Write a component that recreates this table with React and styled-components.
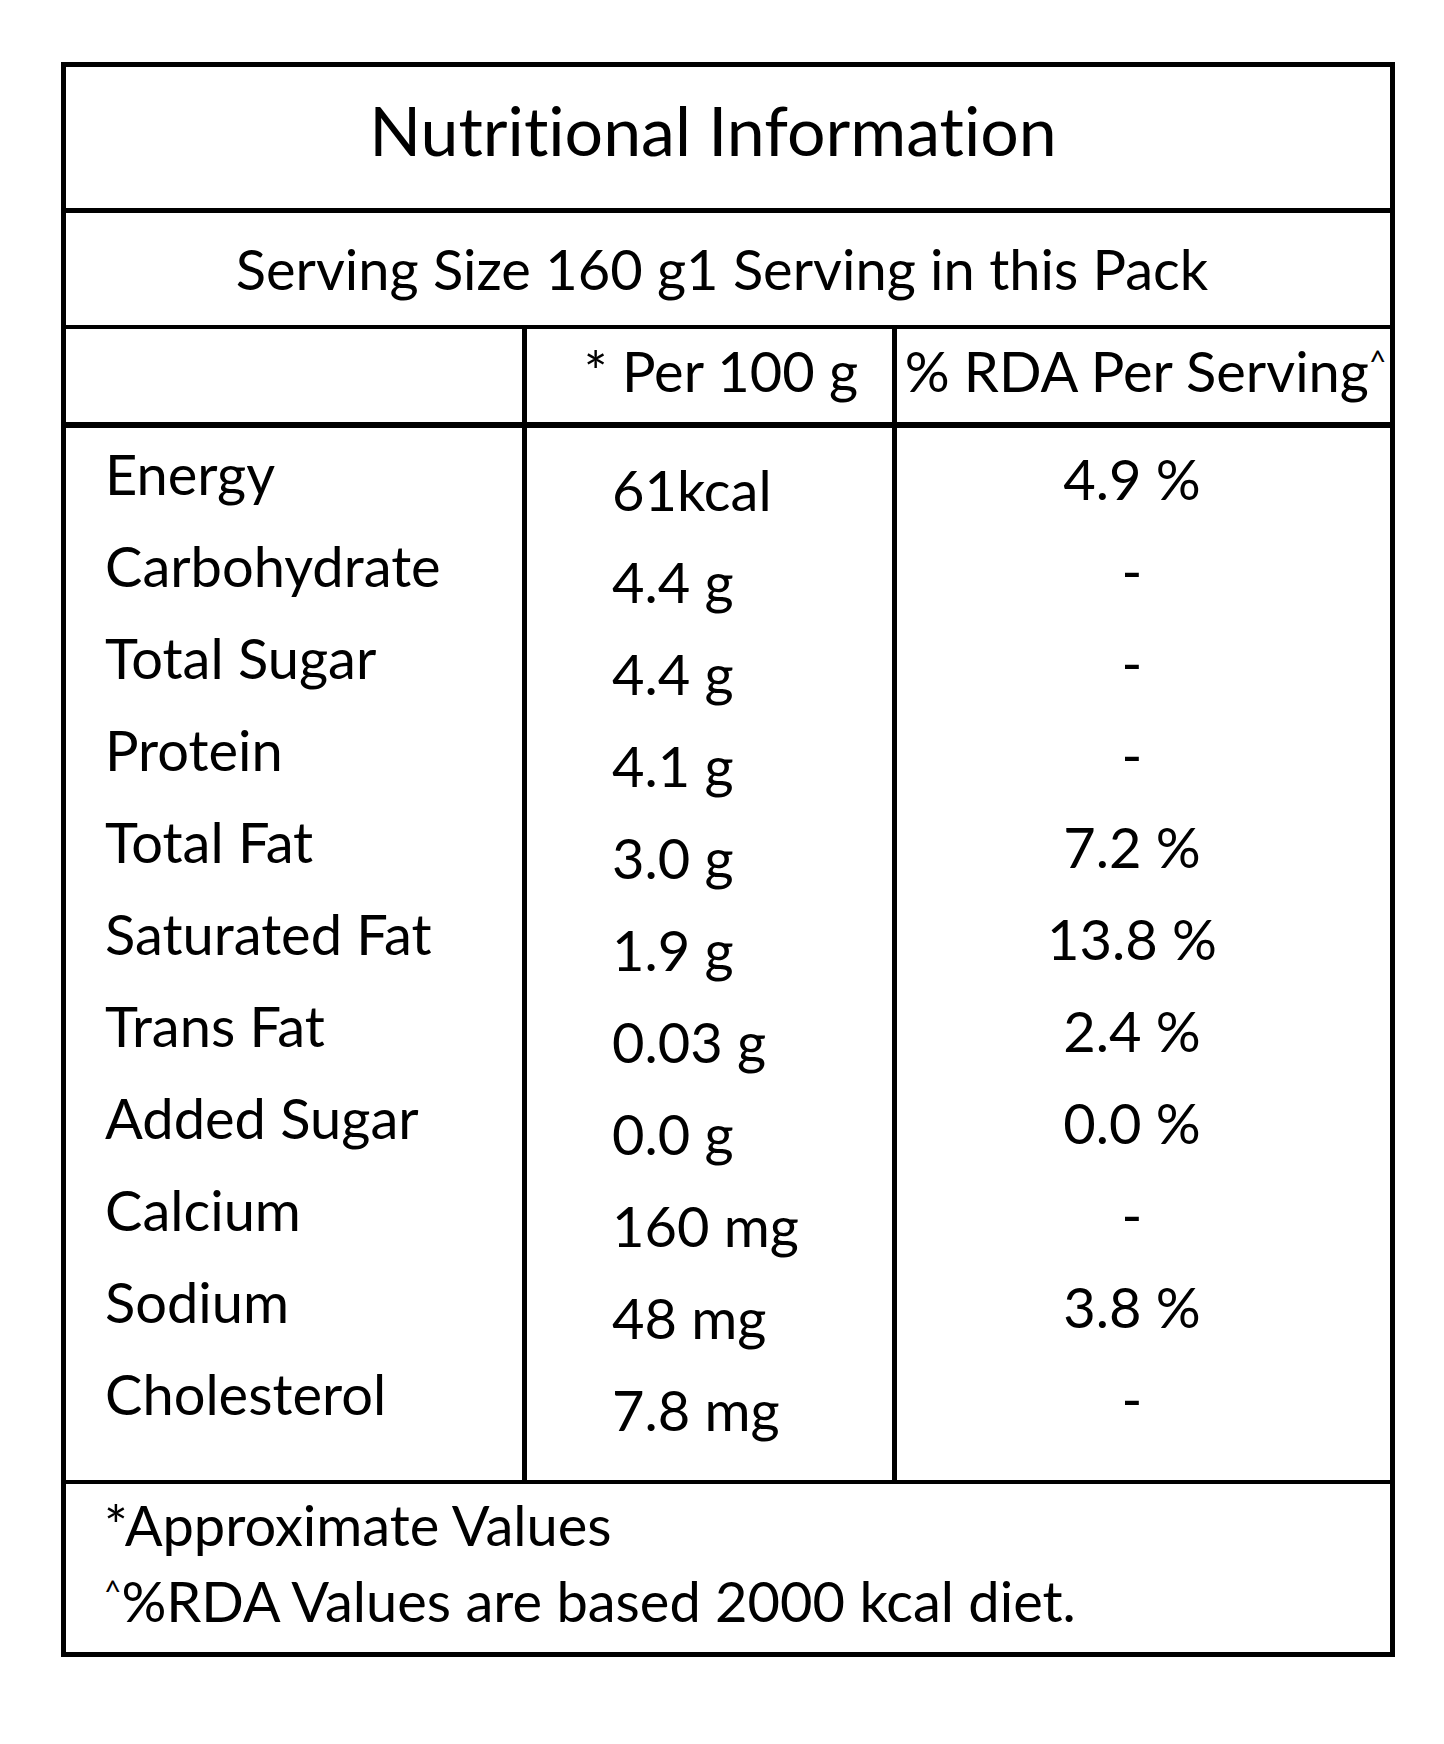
import React from 'react';
import styled, { createGlobalStyle } from 'styled-components';

const GlobalStyle = createGlobalStyle`
  html, body {
    margin: 0;
    padding: 0;
    background: #fff;
  }
  body {
    font-family: Lato, "Open Sans", sans-serif;
    font-variant-ligatures: none;
    color: #000;
  }
`;

const Page = styled.div`
  width: 1444px;
  min-height: 1744px;
  padding: 62px 0 0 61px;
  box-sizing: border-box;
`;

const Table = styled.div`
  width: 1334px;
  border: 5px solid #000;
  box-sizing: border-box;
`;

const TitleRow = styled.div`
  height: 146px;
  border-bottom: 5px solid #000;
  box-sizing: border-box;
  padding: 22px 30px 0 0;
  text-align: center;
  font-size: 68px;
  line-height: 1.2;
`;

const ServingRow = styled.div`
  height: 116px;
  border-bottom: 4px solid #000;
  box-sizing: border-box;
  padding: 22px 12px 0 0;
  text-align: center;
  font-size: 56px;
  line-height: 1.2;
`;

const Columns = styled.div`
  display: grid;
  grid-template-columns: 461px 370px 1fr;
  height: ${(p) => p.$height}px;
  border-bottom: ${(p) => p.$rule}px solid #000;
  box-sizing: border-box;
`;

const Cell = styled.div`
  border-right: ${(p) => (p.$last ? 0 : 5)}px solid #000;
  padding: ${(p) => p.$pad || '0'};
  text-align: ${(p) => p.$align || 'left'};
  font-size: 56px;
  line-height: ${(p) => p.$lh || '1.2'};
  white-space: nowrap;
`;

const Caret = styled.span`
  font-size: 30px;
  vertical-align: 19px;
  line-height: 0;
`;

const Entry = styled.div`
  height: 92px;
`;

const Footer = styled.div`
  height: 168px;
  padding: 3px 0 0 38px;
  box-sizing: border-box;
  font-size: 56px;
  line-height: 76px;
`;

const rows = [
  ['Energy', '61kcal', '4.9 %'],
  ['Carbohydrate', '4.4 g', '-'],
  ['Total Sugar', '4.4 g', '-'],
  ['Protein', '4.1 g', '-'],
  ['Total Fat', '3.0 g', '7.2 %'],
  ['Saturated Fat', '1.9 g', '13.8 %'],
  ['Trans Fat', '0.03 g', '2.4 %'],
  ['Added Sugar', '0.0 g', '0.0 %'],
  ['Calcium', '160 mg', '-'],
  ['Sodium', '48 mg', '3.8 %'],
  ['Cholesterol', '7.8 mg', '-'],
];

const App = () => {
  return (
    <Page>
      <GlobalStyle />
      <Table>
        <TitleRow>Nutritional Information</TitleRow>
        <ServingRow>Serving Size 160 g1 Serving in this Pack</ServingRow>
        <Columns $height={99} $rule={6}>
          <Cell />
          <Cell $align="center" $pad="8px 0 0 23px">* Per 100 g</Cell>
          <Cell $last $align="center" $pad="8px 0 0 4px">
            % RDA Per Serving<Caret>^</Caret>
          </Cell>
        </Columns>
        <Columns $height={1056} $rule={4}>
          <Cell $pad="0 0 0 39px" $lh="92px">
            {rows.map((r) => <Entry key={r[0]}>{r[0]}</Entry>)}
          </Cell>
          <Cell $pad="16px 0 0 85px" $lh="92px">
            {rows.map((r) => <Entry key={r[0]}>{r[1]}</Entry>)}
          </Cell>
          <Cell $last $align="center" $pad="5px 23px 0 0" $lh="92px">
            {rows.map((r) => <Entry key={r[0]}>{r[2]}</Entry>)}
          </Cell>
        </Columns>
        <Footer>
          <div>*Approximate Values</div>
          <div><Caret>^</Caret>%RDA Values are based 2000 kcal diet.</div>
        </Footer>
      </Table>
    </Page>
  );
};

export default App;
